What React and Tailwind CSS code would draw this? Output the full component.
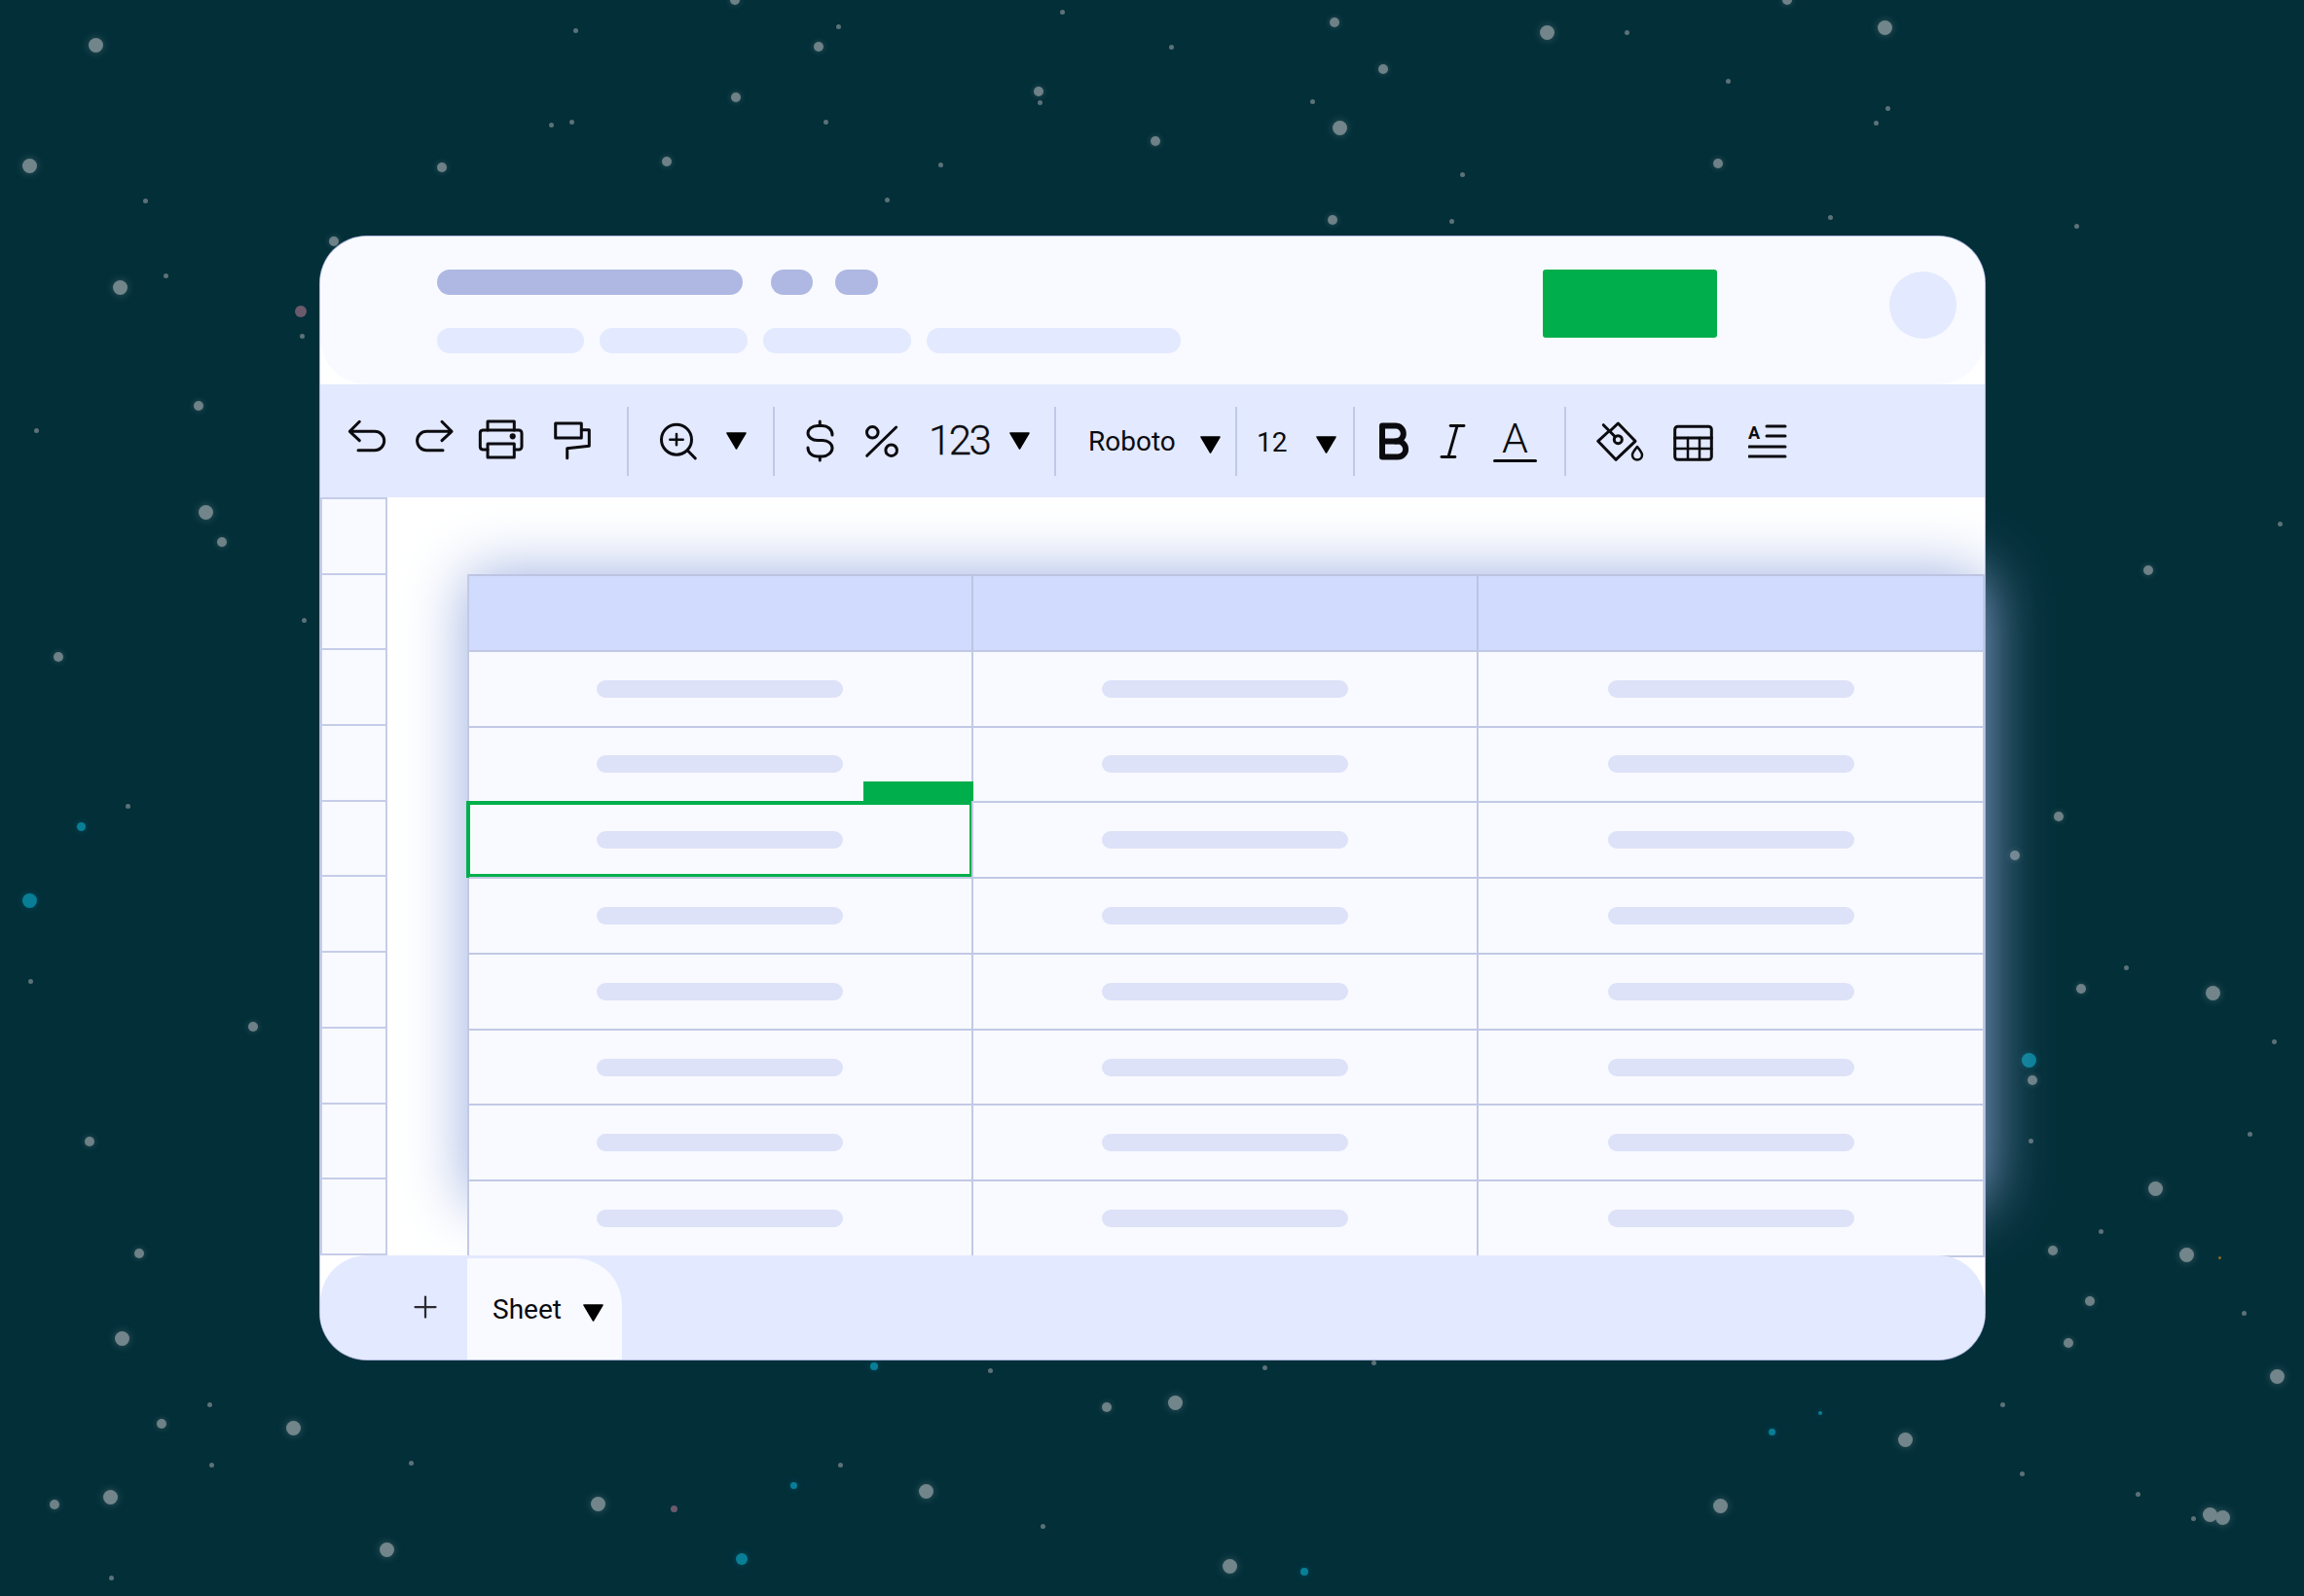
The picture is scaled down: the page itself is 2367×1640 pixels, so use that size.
import { Plus } from "lucide-react";
import { TbBold, TbItalic } from "react-icons/tb";

// preview coords, scaled by S to the full page
const S = 2367 / 1568;
const big = [[65,31],[20,113],[82,196],[140,349],[1053,22],[1283,19],[912,87],[1467,809],[1488,854],[1506,676],[1550,937],[1297,980],[1171,1025],[1513,1033],[1504,1031],[837,1066],[630,1015],[800,955],[407,1024],[263,1055],[75,1019],[83,911],[200,972]];
const mid = [[501,66],[707,62],[557,32],[908,15],[941,47],[786,96],[454,110],[301,114],[227,164],[151,369],[40,447],[172,699],[61,777],[95,853],[110,969],[37,1024],[1462,388],[1401,556],[1371,582],[1416,673],[1383,735],[1397,851],[1422,886],[1408,914],[1169,111],[907,150],[135,276],[753,958],[1216,0],[500,0]];
const small = [[392,21],[571,18],[797,32],[1107,22],[1176,55],[893,69],[1285,74],[1277,84],[708,70],[375,85],[389,83],[562,83],[640,112],[604,136],[995,119],[988,151],[1246,148],[1413,154],[99,137],[113,188],[206,229],[25,293],[207,422],[87,549],[21,668],[1552,357],[1447,659],[1548,709],[1531,772],[1382,777],[1430,838],[1527,894],[1376,1003],[1455,1017],[1493,1034],[143,956],[144,997],[280,996],[572,997],[674,933],[861,931],[935,928],[710,1039],[76,1074],[1363,956],[723,8]];
const teal = [[20,613,15],[55,563,9],[1381,722,15],[595,930,8],[1206,975,7],[540,1011,7],[505,1061,12],[888,1070,8],[1239,962,4]];
const rose = [[205,212,12],[459,1027,7]];

function Star({ x, y, d, className }) {
  return (
    <div
      className={"absolute rounded-full " + className}
      style={{ left: x * S - d / 2, top: y * S - d / 2, width: d, height: d }}
    />
  );
}

function Stars() {
  return (
    <>
      {big.map(([x, y]) => <Star key={"b" + x + y} x={x} y={y} d={15} className="bg-[#71858a] shadow-[0_0_8px_rgba(125,143,146,0.45)]" />)}
      {mid.map(([x, y]) => <Star key={"m" + x + y} x={x} y={y} d={10} className="bg-[#6d8186] shadow-[0_0_6px_rgba(125,143,146,0.4)]" />)}
      {small.map(([x, y]) => <Star key={"s" + x + y} x={x} y={y} d={5} className="bg-[#5c7278]" />)}
      {teal.map(([x, y, d]) => <Star key={"t" + x + y} x={x} y={y} d={d} className="bg-[#087f96] shadow-[0_0_6px_rgba(8,127,150,0.4)]" />)}
      {rose.map(([x, y, d]) => <Star key={"r" + x + y} x={x} y={y} d={d} className="bg-[#6b5a6c]" />)}
      <Star x={1511} y={856} d={3} className="bg-[#8a6a2c]" />
    </>
  );
}

function Icon({ w = 50, className = "", children }) {
  return (
    <svg
      width={w}
      height="60"
      viewBox={`0 0 ${w} 60`}
      fill="none"
      stroke="#0b0b0f"
      strokeWidth="3"
      strokeLinecap="round"
      strokeLinejoin="round"
      className={"shrink-0 " + className}
    >
      {children}
    </svg>
  );
}

function Tri({ className = "" }) {
  return (
    <svg width="21" height="18" viewBox="0 0 21 18" className={"shrink-0 " + className}>
      <path d="M1 1H20L10.5 17Z" fill="#000" stroke="#000" strokeWidth="1.5" strokeLinejoin="round" />
    </svg>
  );
}

function Divider({ className = "" }) {
  return <div className={"w-[2px] h-[71px] shrink-0 bg-[#c0cae6] " + className} />;
}

function Toolbar() {
  return (
    <div className="h-[116px] bg-[#e3e9fe] flex items-center font-['Roboto',sans-serif] text-[#0b0b0f]">
      <Icon w={45} className="ml-[26px]">
        <path d="M14.3 10.3L4.3 20.3L14.3 29.7M4.3 20.3H30A9.7 9.7 0 0 1 30 39.7H13" />
      </Icon>
      <Icon w={45} className="ml-[25px]">
        <path d="M29 10.3L39 20.3L29 29.7M39 20.3H13.3A9.7 9.7 0 0 0 13.3 39.7H30" />
      </Icon>
      <Icon className="ml-[20px]">
        <path d="M11 19V10H38.3V19" />
        <path d="M11 39H6A3 3 0 0 1 3.3 36V22A3 3 0 0 1 6 19H43A3 3 0 0 1 46 22V36A3 3 0 0 1 43 39H38.3" />
        <rect x="11" y="33" width="27.3" height="14" />
        <circle cx="36.7" cy="25.3" r="1.6" fill="#0b0b0f" />
      </Icon>
      <Icon className="ml-[25px]">
        <rect x="5.7" y="12" width="26.6" height="15" />
        <path d="M32.3 18.7H40.3V35.3L17.7 37.7V47.7" />
      </Icon>
      <Divider className="ml-[29px]" />
      <Icon className="ml-[24px]">
        <circle cx="25" cy="28.7" r="15.5" />
        <path d="M36.7 40.3L44.3 48" />
        <path d="M18.3 28.7H31.7M25 23V34.3" strokeWidth="2.5" />
      </Icon>
      <Tri className="ml-[26px]" />
      <Divider className="ml-[27px]" />
      <Icon w={45} className="ml-[24px]">
        <path d="M35 24C35 18 30 14.5 25 14.5H20C14 14.5 10 18.5 10 22C10 26 14 29.5 20 29.5H25C31 29.5 35 33 35 37.5C35 42 30 46 25 46H20C14 46 10 42 10 37M22.3 10V14.5M22.3 46V50" />
      </Icon>
      <Icon w={45} className="ml-[19px]">
        <circle cx="12.3" cy="21.3" r="5.8" />
        <circle cx="31.7" cy="39.7" r="5.8" />
        <path d="M6.7 45.3L36.7 16" />
      </Icon>
      <span className="ml-[25px] w-[63px] text-[42px] leading-none font-light tracking-[-2.6px] [-webkit-text-stroke:0.3px_#0b0b0f]">123</span>
      <Tri className="ml-[20px]" />
      <Divider className="ml-[25px]" />
      <span className="ml-[33px] w-[91px] pt-[2px] text-[28px] leading-none">Roboto</span>
      <Tri className="ml-[24px] mt-[7px]" />
      <Divider className="ml-[15px]" />
      <span className="ml-[20px] w-[31px] pt-[3px] text-[28px] leading-none">12</span>
      <Tri className="ml-[30px] mt-[7px]" />
      <Divider className="ml-[17px]" />
      <TbBold size={55} strokeWidth={2.6} className="ml-[12px] shrink-0" />
      <TbItalic size={55} strokeWidth={1.3} className="ml-[6px] shrink-0" />
      <div className="ml-[14px] w-[45px] h-[50px] shrink-0 flex flex-col items-center">
        <span className="text-[43px] leading-[44px] font-light">A</span>
        <div className="w-[45px] h-[3px] rounded-full bg-[#0b0b0f]" />
      </div>
      <Divider className="ml-[28px]" />
      <Icon w={60} className="ml-[25px]">
        <path d="M21 19L28.3 12L46 30.3L26 49.3L7.7 30.3L19 20" />
        <path d="M13.3 13.7L28.3 28.7" />
        <circle cx="28.3" cy="28.7" r="4" fill="#e3e9fe" />
        <path d="M48 36C45 40 43 42 43 44.5A5 5 0 0 0 53 44.5C53 42 51 40 48 36Z" strokeWidth="2.5" />
      </Icon>
      <Icon w={60} className="ml-[16px]">
        <rect x="10.7" y="15.3" width="37.6" height="34" rx="3" />
        <path d="M10.7 27H48.3" />
        <path d="M24 27V49M36 27V49M10.7 38H48.3" strokeWidth="2.5" />
      </Icon>
      <svg width="40" height="60" viewBox="0 0 40 60" className="ml-[26px] shrink-0" stroke="#0b0b0f" strokeWidth="3" strokeLinecap="round">
        <text x="0" y="28" fontSize="18" fontWeight="700" fontFamily="Roboto, sans-serif" fill="#0b0b0f" stroke="none">A</text>
        <path d="M19 15H38M19 25H38M1 36H38M1 46H38" fill="none" />
      </svg>
    </div>
  );
}

const rowHeads = Array.from({ length: 10 }, (_, i) => i);
const rows = [0, 1, 2, 3, 4, 5, 6, 7];

function Cell({ selected, first }) {
  return (
    <div className={"relative flex items-center justify-center bg-[#f8faff] border-t-2 border-[#c2c9e5] " + (first ? "pr-[2px]" : "border-l-2")}>
      <div className="w-[253px] h-[18px] rounded-full bg-[#dde2f8]" />
      {selected && (
        <>
          <div className="absolute -left-[3px] -right-[2px] -top-[2px] -bottom-[1px] border-4 border-[#00ae4c]" />
          <div className="absolute right-[-2px] bottom-full w-[113px] h-[22px] bg-[#00ae4c]" />
        </>
      )}
    </div>
  );
}

function Sheet() {
  return (
    <div className="relative ml-[82px] mt-[79px] w-[1559px] h-[702px]">
      <div className="absolute inset-x-0 top-0 bottom-[55px] shadow-[0_0_60px_#9aaee0]" />
      <div className="relative h-full grid grid-cols-[516px_519px_1fr] grid-rows-[repeat(9,1fr)] border-x-2 border-b-2 border-[#c2c9e5]">
        {[0, 1, 2].map((c) => (
          <div key={c} className={"bg-[#d0dbfd] border-t-2 border-[#bcc4e2] " + (c ? "border-l-2" : "")} />
        ))}
        {rows.map((r) =>
          [0, 1, 2].map((c) => <Cell key={r + "-" + c} selected={r === 2 && c === 0} first={c === 0} />)
        )}
      </div>
    </div>
  );
}

export default function App() {
  return (
    <div className="relative w-[2367px] h-[1640px] overflow-hidden bg-[#032f39] pt-[243px] pl-[329px] font-['Roboto',sans-serif]">
      <Stars />
      <div className="relative w-[1710px] h-[1154px] rounded-[48px] bg-white flex flex-col shadow-[0_0_0_1px_#a9b4d8]">
        {/* title bar */}
        <div className="h-[152px] rounded-[48px] bg-[#f8faff] flex justify-between pl-[120px] pr-[29px] pt-[34px]">
          <div className="flex flex-col gap-[34px]">
            <div className="flex gap-[29px]">
              <div className="w-[314px] h-[26px] rounded-[13px] bg-[#aeb8e2]" />
              <div className="flex gap-[23px]">
                <div className="w-[43px] h-[26px] rounded-[13px] bg-[#aeb8e2]" />
                <div className="w-[44px] h-[26px] rounded-[13px] bg-[#aeb8e2]" />
              </div>
            </div>
            <div className="flex gap-[16px]">
              <div className="w-[151px] h-[26px] rounded-[13px] bg-[#e3e9fe]" />
              <div className="w-[152px] h-[26px] rounded-[13px] bg-[#e3e9fe]" />
              <div className="w-[152px] h-[26px] rounded-[13px] bg-[#e3e9fe]" />
              <div className="w-[261px] h-[26px] rounded-[13px] bg-[#e3e9fe]" />
            </div>
          </div>
          <div className="flex gap-[177px]">
            <div className="w-[179px] h-[70px] rounded-[3px] bg-[#00ae4c]" />
            <div className="w-[69px] h-[69px] mt-[2px] rounded-full bg-[#e3e9fe]" />
          </div>
        </div>
        <Toolbar />
        {/* body */}
        <div className="h-[779px] flex">
          <div className="w-[69px] grid grid-rows-[repeat(10,1fr)] border-x-2 border-b-2 border-[#c6cde8]">
            {rowHeads.map((i) => (
              <div key={i} className="bg-[#f8faff] border-t-2 border-[#c6cde8]" />
            ))}
          </div>
          <Sheet />
        </div>
        {/* tab bar */}
        <div className="relative z-10 h-[107px] rounded-[48px] bg-[#e3e9fe] flex items-end pl-[151px]">
          <Plus size={36} strokeWidth={1.5} className="absolute left-[90px] top-[35px] text-[#2b2b30]" />
          <div className="w-[159px] h-[104px] rounded-tr-[48px] bg-[#f8faff] flex items-center pl-[26px] text-[#0b0b0f]">
            <span className="w-[93px] pt-[2px] text-[28px] leading-none">Sheet</span>
            <Tri className="mt-[8px]" />
          </div>
        </div>
      </div>
    </div>
  );
}
